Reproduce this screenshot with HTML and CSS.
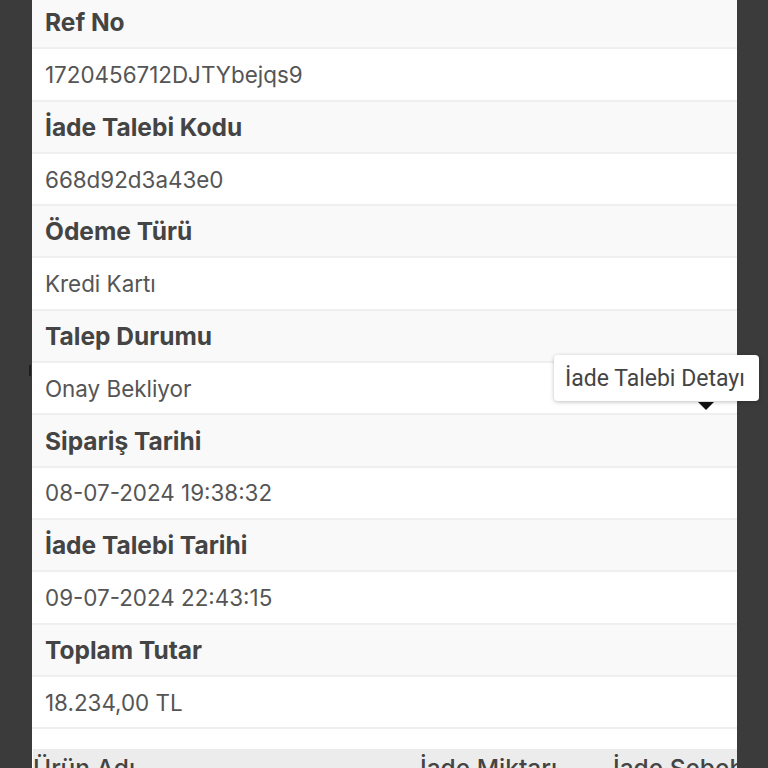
FILE: index.html
```html
<!DOCTYPE html>
<html lang="tr">
<head>
    <meta charset="UTF-8">
    <meta name="viewport" content="width=device-width, initial-scale=1.0">
    <title>İade Talebi Detayı</title>
    <link rel="stylesheet" href="styles.css">
</head>
<body>
  <div class="sayfa">
      <span class="kenar-izi"></span>
      <div class="detay-panel">
          <div class="satir baslik">Ref No</div>
          <div class="satir deger">1720456712DJTYbejqs9</div>
          <div class="satir baslik">İade Talebi Kodu</div>
          <div class="satir deger">668d92d3a43e0</div>
          <div class="satir baslik">Ödeme Türü</div>
          <div class="satir deger">Kredi Kartı</div>
          <div class="satir baslik">Talep Durumu</div>
          <div class="satir deger">Onay Bekliyor</div>
          <div class="satir baslik">Sipariş Tarihi</div>
          <div class="satir deger">08-07-2024 19:38:32</div>
          <div class="satir baslik">İade Talebi Tarihi</div>
          <div class="satir deger">09-07-2024 22:43:15</div>
          <div class="satir baslik">Toplam Tutar</div>
          <div class="satir deger">18.234,00 TL</div>

          <div class="urun-tablo">
              <div class="tablo-baslik">
                  <span class="kolon ad">Ürün Adı</span>
                  <span class="kolon miktar">İade Miktarı</span>
                  <span class="kolon sebep">İade Sebebi</span>
              </div>
          </div>
      </div>

      <div class="ipucu">İade Talebi Detayı</div>
      <span class="ipucu-ok"></span>
  </div>
</body>
</html>
```

FILE: styles.css
```css
body { margin: 0; padding: 0; background-color: #3b3b3b; font-family: Inter, "Noto Sans", sans-serif; color: #555; overflow: hidden; height: 768px; }
.sayfa { position: relative; height: 768px; display: flow-root; }
.detay-panel { margin: -3px 0 0 32px; width: 705px; background-color: #fff; overflow: hidden; height: 800px; }
.satir { box-sizing: border-box; height: 52.3px; padding: 0 13px; display: flex; align-items: center; border-bottom: 2px solid #efefef; white-space: nowrap; }
.baslik { background-color: #f9f9f9; font-size: 24.5px; font-weight: 700; color: #444; }
.deger { background-color: #fff; font-size: 22.4px; font-weight: 400; color: #555; }
.urun-tablo { margin-top: 20px; padding-left: 1px; }
.tablo-baslik { display: flex; background-color: #ececec; height: 52px; width: 760px; padding-top: 4px; box-sizing: border-box; }
.kolon { font-size: 24.5px; font-weight: 500; color: #444; white-space: nowrap; }
.ad { width: 387px; }
.miktar { width: 193px; }
.sebep { width: 180px; }
.ipucu { position: absolute; left: 554px; top: 355px; width: 205px; height: 46px; box-sizing: border-box; padding: 0 11px; display: flex; align-items: center; background-color: #fff; border-radius: 4px; box-shadow: 0 1px 4px rgba(0, 0, 0, 0.25); font-family: Roboto, sans-serif; font-size: 23px; color: #444; white-space: nowrap; }
.ipucu-ok { position: absolute; left: 698px; top: 402px; width: 0; height: 0; border-left: 8px solid transparent; border-right: 8px solid transparent; border-top: 8px solid #111; }
.kenar-izi { position: absolute; left: 29px; top: 365px; width: 2px; height: 11px; background-color: #1e1e1e; }
```
